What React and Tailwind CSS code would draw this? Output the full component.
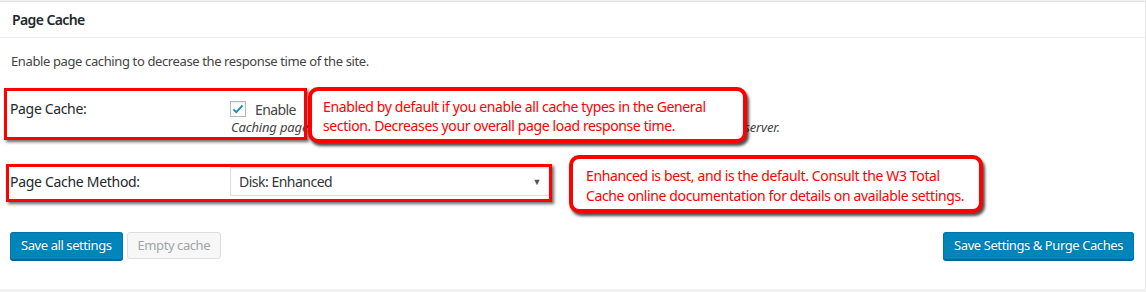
import React from "react";

function Checkbox() {
  return (
    <span className="w-4 h-4 border border-[#b4b9be] bg-white shadow-[inset_0_1px_2px_rgba(0,0,0,0.1)] flex items-center justify-center">
      <svg width="14" height="14" viewBox="0 0 20 20">
        <path d="M3.5 10.5l4 4 9-9.5" fill="none" stroke="#1e8cbe" strokeWidth="2.6" />
      </svg>
    </span>
  );
}

function Callout({ className, children }) {
  return (
    <div
      className={`absolute border-[4px] border-[#ff0000] rounded-[10px] bg-white shadow-[2px_3px_3px_rgba(0,0,0,0.7)] text-[#ff0000] text-[14px] leading-[19px] tracking-[-0.37px] whitespace-nowrap ${className}`}
    >
      {children}
    </div>
  );
}

const blueBtn =
  "h-[28px] px-[10px] rounded-[3px] bg-[#0085ba] border border-[#0073aa] border-b-[#006799] shadow-[0_1px_0_#006799] text-white text-[13px] tracking-[-0.42px] [text-shadow:0_-1px_1px_#006799]";

export default function App() {
  return (
    <div className="relative h-[292px] bg-[#f1f1f1] pt-px font-['Noto_Sans',sans-serif] text-[#444]">
      <div className="bg-white border-t border-r border-[#e5e5e5] h-[288px]">
        <h3 className="h-[36px] border-b border-[#eee] px-3 flex items-center text-[14px] font-semibold tracking-[-0.6px] text-[#23282d]">
          Page Cache
        </h3>
        <p className="mt-[14px] ml-[11px] text-[13px] leading-[18px] tracking-[-0.38px]">
          Enable page caching to decrease the response time of the site.
        </p>

        <div className="mt-[30px] flex">
          <div className="w-[230px] pl-[10px] text-[14px] leading-[18px] tracking-[-0.35px] text-[#23282d]">Page Cache:</div>
          <div className="flex flex-col">
            <label className="h-[18px] flex items-center gap-[9px] text-[14px] tracking-[-0.6px] text-[#444]">
              <Checkbox />
              Enable
            </label>
            <span className="ml-px text-[13px] leading-[18px] italic tracking-[-0.16px]">
              Caching pages will reduce the response time of your site and increase the scale of your web server.
            </span>
          </div>
        </div>

        <div className="mt-[31px] flex items-center">
          <div className="w-[230px] pl-[10px] text-[14px] tracking-[-0.3px] text-[#23282d]">Page Cache Method:</div>
          <div className="w-[320px] h-[29px] border border-[#ddd] shadow-[inset_0_1px_2px_rgba(0,0,0,0.07)] flex items-center justify-between pl-2 pr-2 text-[14px] tracking-[-0.5px] text-[#32373c]">
            <span>Disk: Enhanced</span>
            <span className="text-[9px] text-[#555]">▼</span>
          </div>
        </div>

        <div className="mt-[36px] flex items-start justify-between pl-[10px] pr-[11px]">
          <div className="flex gap-[4px]">
            <button className={blueBtn}>Save all settings</button>
            <button className="h-[27px] px-[10px] rounded-[3px] bg-[#f7f7f7] border border-[#ddd] text-[#a0a5aa] text-[13px] tracking-[-0.42px]">
              Empty cache
            </button>
          </div>
          <button className={blueBtn}>Save Settings &amp; Purge Caches</button>
        </div>
      </div>

      <div className="absolute left-[4px] top-[88px] w-[303px] h-[52px] border-[3px] border-[#ff0000] shadow-[2px_2px_3px_rgba(0,0,0,0.6)]" />
      <div className="absolute left-[6px] top-[164px] w-[546px] h-[38px] border-[3px] border-[#ff0000] shadow-[2px_2px_3px_rgba(0,0,0,0.6)]" />

      <Callout className="left-[308px] top-[87px] w-[439px] h-[56px] pl-[11px] pt-[6px]">
        Enabled by default if you enable all cache types in the General
        <br />
        section. Decreases your overall page load response time.
      </Callout>
      <Callout className="left-[569px] top-[155px] w-[414px] h-[58px] pl-[13px] pt-[7px] leading-[20px]">
        Enhanced is best, and is the default. Consult the W3 Total
        <br />
        Cache online documentation for details on available settings.
      </Callout>
    </div>
  );
}
